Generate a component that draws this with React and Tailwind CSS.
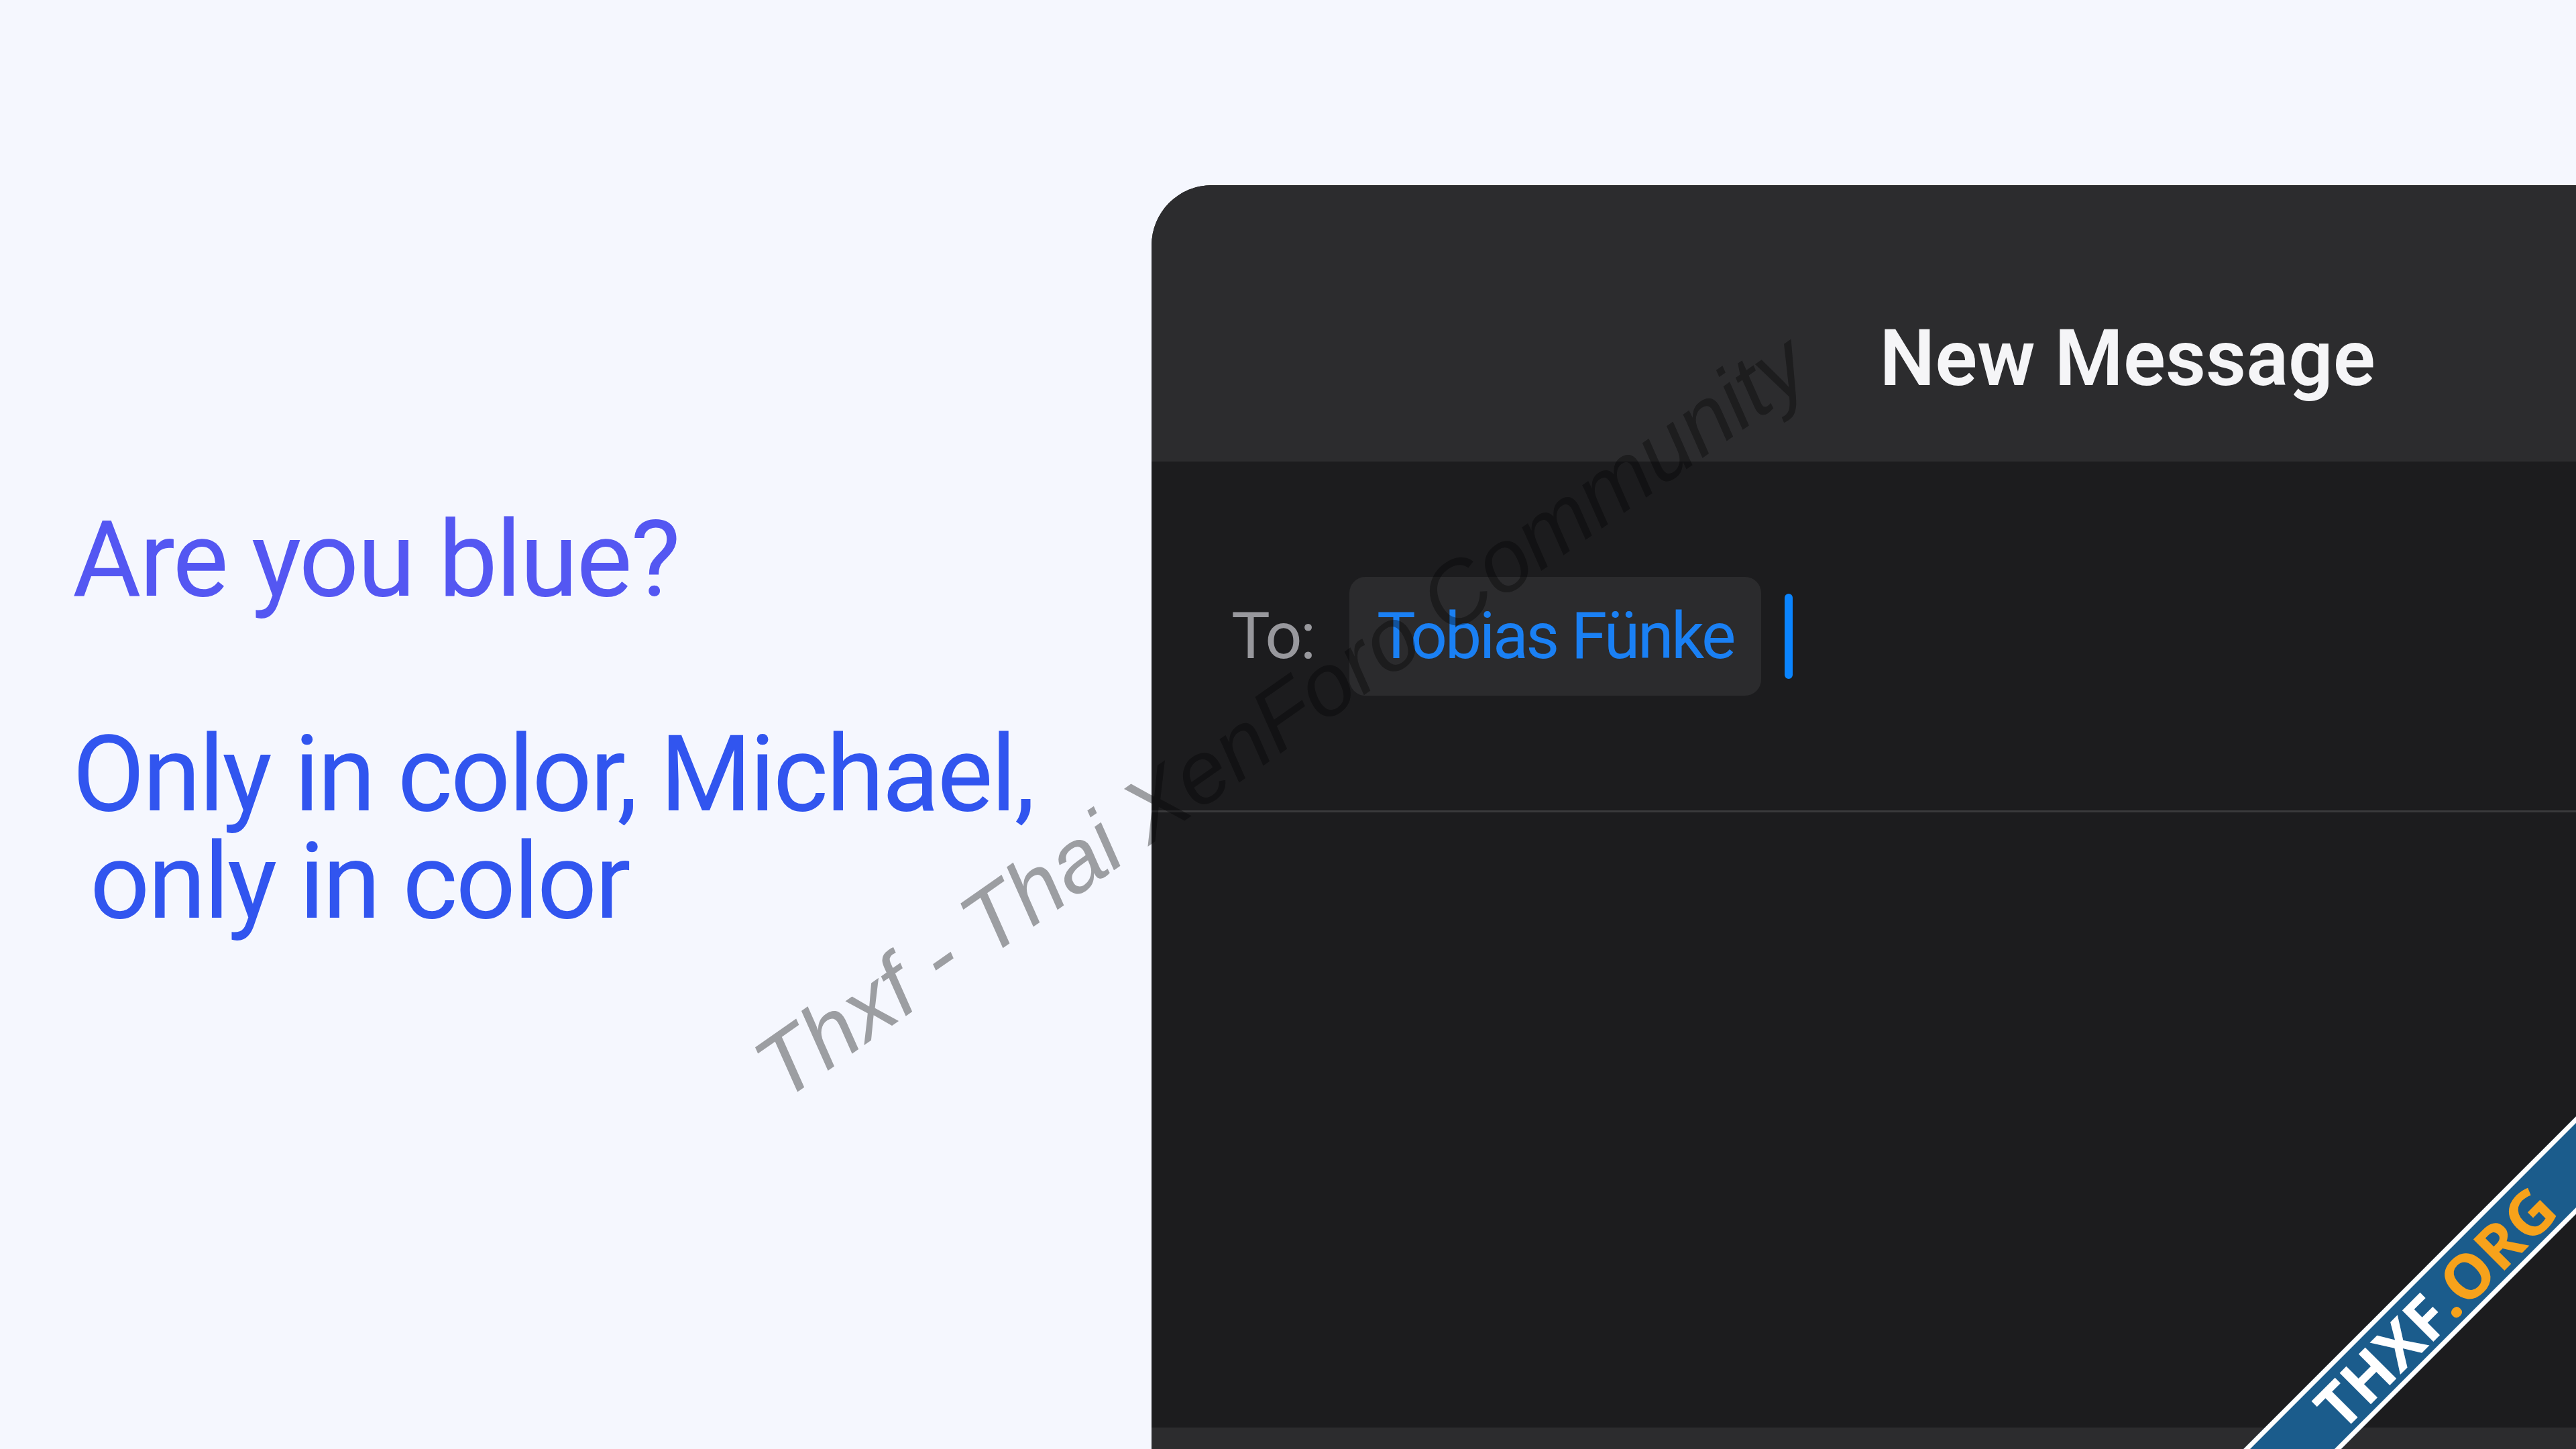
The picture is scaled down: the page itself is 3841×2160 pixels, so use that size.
export default function App() {
  return (
    <div className="relative flex w-[3841px] h-[2160px] overflow-hidden bg-[#f5f7fe] font-['Roboto',sans-serif]">
      {/* left copy */}
      <div className="w-[1717px] shrink-0 pl-[108px] pt-[754px] text-[157px] leading-[160px]">
        <p className="tracking-[-0.015em] text-[#5457f2]">Are you blue?</p>
        <p className="mt-[160px] tracking-[-0.02em] text-[#3155ef]">Only in color, Michael,</p>
        <p className="pl-[26px] tracking-[-0.02em] text-[#3155ef]">only in color</p>
      </div>

      {/* compose sheet */}
      <div className="mt-[276px] flex h-[1884px] w-[2910px] shrink-0 flex-col overflow-hidden rounded-tl-[90px] bg-[#1c1c1e]">
        <div className="flex h-[412px] justify-center bg-[#2c2c2e] pt-[200px]">
          <span className="text-[117px] leading-none font-semibold text-[#f5f5f7]">New Message</span>
        </div>

        <div className="flex h-[520px] items-center pl-[119px]">
          <span className="w-[176px] text-[97px] leading-none tracking-[-0.03em] text-[#98989d]">To:</span>
          <div className="flex h-[177px] items-center rounded-[24px] bg-[#2b2b2d] px-[41px]">
            <span className="text-[97px] leading-none tracking-[-0.035em] text-[#1a80f4]">Tobias Fünke</span>
          </div>
          <div className="ml-[35px] h-[127px] w-[12px] rounded-full bg-[#0a84ff]" />
        </div>

        <div className="h-[3px] bg-[#3a3a3c]" />
        <div className="flex-1" />
        <div className="h-[32px] bg-[#2c2c2e]" />
      </div>

      {/* watermark */}
      <div className="pointer-events-none absolute left-[1910px] top-[1068px] -translate-x-1/2 -translate-y-1/2 rotate-[-35deg] whitespace-nowrap font-['Liberation_Sans',sans-serif] text-[132px] italic leading-none text-[#a3a3a3] mix-blend-multiply">
        Thxf - Thai XenForo Community
      </div>

      {/* corner ribbon */}
      <div className="absolute left-[3630px] top-[1948px] flex h-[103px] w-[1300px] -translate-x-1/2 -translate-y-1/2 rotate-[-45deg] items-center justify-center border-y-[7px] border-white bg-[#1b5c8c] font-['Open_Sans',sans-serif] text-[92px] font-bold leading-none">
        <span className="text-white">THXF</span>
        <span className="text-[#f7a21b]">.ORG</span>
      </div>
    </div>
  );
}
